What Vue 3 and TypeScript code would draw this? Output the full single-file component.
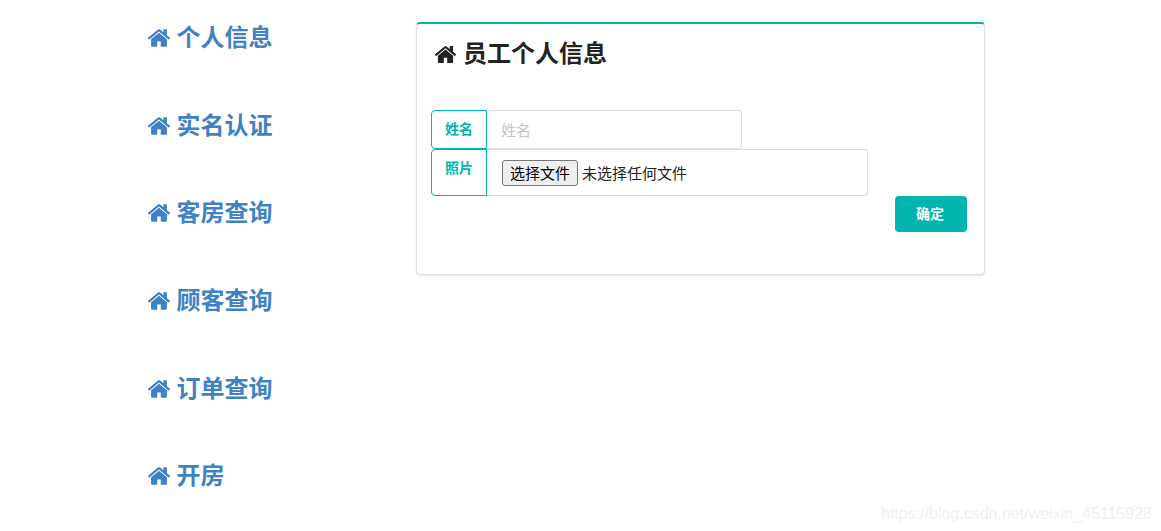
<script setup lang="ts">
const homePath =
  'M1472 992v480q0 26-19 45t-45 19h-384v-384h-256v384h-384q-26 0-45-19t-19-45v-480q0-1 .5-3t.5-3l575-474 575 474q1 2 1 6zm223-69l-62 74q-8 9-21 11h-3q-13 0-21-7l-692-577-692 577q-12 8-24 7-13-2-21-11l-62-74q-8-10-7-23.5t11-21.5l719-599q32-26 76-26t76 26l244 204v-195q0-14 9-23t23-9h192q14 0 23 9t9 23v408l219 182q10 8 11 21.5t-7 23.5z'

const navItems: string[] = ['个人信息', '实名认证', '客房查询', '顾客查询', '订单查询', '开房']
</script>

<template>
  <div class="page">
    <nav class="nav">
      <a v-for="item in navItems" :key="item" class="nav-item" href="#">
        <svg class="home" viewBox="97 97 1598 1598"><path :d="homePath" fill="currentColor" /></svg>
        <span>{{ item }}</span>
      </a>
    </nav>

    <section class="card">
      <h3 class="title">
        <svg class="home title-home" viewBox="97 97 1598 1598"><path :d="homePath" fill="currentColor" /></svg>
        <span>员工个人信息</span>
      </h3>

      <div class="group name-group">
        <label class="addon">姓名</label>
        <input class="field" type="text" placeholder="姓名" />
      </div>
      <div class="group file-group">
        <label class="addon addon-top">照片</label>
        <div class="field file-field">
          <button class="file-btn" type="button">选择文件</button>
          <span class="file-text">未选择任何文件</span>
        </div>
      </div>
      <div class="actions">
        <button class="submit" type="button">确定</button>
      </div>
    </section>

    <div class="watermark">https://blog.csdn.net/weixin_45115928</div>
  </div>
</template>

<style>
html,
body {
  background: #fff;
}
</style>

<style scoped>
.page {
  position: relative;
  display: flex;
  align-items: flex-start;
  width: 1161px;
  height: 531px;
  box-sizing: border-box;
  padding: 22px 0 0 148px;
  overflow: hidden;
  font-family: "Liberation Sans", "Noto Sans CJK SC", sans-serif;
  color: #222;
}

.nav {
  display: flex;
  flex-direction: column;
  gap: 53.7px;
  width: 268px;
  flex: none;
  margin-top: -1px;
}

.nav-item {
  display: flex;
  align-items: center;
  gap: 6.5px;
  height: 34px;
  font-size: 24px;
  font-weight: 700;
  line-height: 34px;
  color: #3f82c4;
  text-decoration: none;
}

.home {
  width: 22px;
  height: 22px;
  flex: none;
}

.card {
  width: 569px;
  height: 253px;
  flex: none;
  box-sizing: border-box;
  padding: 0 17px 0 14px;
  background: #fff;
  border: 1px solid #e0e0e0;
  border-top: 2px solid #00b5ad;
  border-radius: 4px;
  box-shadow: 0 1px 2px rgba(0, 0, 0, 0.1);
}

.title {
  display: flex;
  align-items: center;
  gap: 7px;
  height: 34px;
  margin: 13px 0 39px 4px;
  font-size: 24px;
  font-weight: 700;
  line-height: 34px;
  color: #222;
}

.title-home {
  width: 21px;
  height: 21px;
}

.group {
  display: flex;
}

.name-group {
  width: 311px;
  height: 39px;
}

.file-group {
  width: 437px;
  height: 47px;
}

.addon {
  width: 56px;
  flex: none;
  box-sizing: border-box;
  display: flex;
  align-items: center;
  justify-content: center;
  padding-bottom: 3px;
  font-size: 14px;
  font-weight: 700;
  color: #00b5ad;
  background: #fff;
  border: 1px solid #00b5ad;
  border-radius: 4px 0 0 4px;
}

.addon-top {
  align-items: flex-start;
  padding: 7px 0 0;
}

.field {
  flex: 1;
  min-width: 0;
  box-sizing: border-box;
  padding: 1px 14px 0;
  font-family: inherit;
  font-size: 15px;
  color: #222;
  background: #fff;
  border: 1px solid #ddd;
  border-left: none;
  border-radius: 0 4px 4px 0;
  outline: none;
}

.field::placeholder {
  color: #c4c4c4;
}

.file-field {
  display: flex;
  align-items: center;
  gap: 4px;
  padding: 0 15px;
}

.file-btn {
  width: 76px;
  height: 26px;
  padding: 2px 0 0;
  font-family: inherit;
  font-size: 15px;
  line-height: 22px;
  color: #000;
  background: #efefef;
  border: 1px solid #767676;
  border-radius: 3px;
}

.file-text {
  font-size: 15px;
  color: #222;
}

.actions {
  display: flex;
  justify-content: flex-end;
}

.submit {
  width: 72px;
  height: 36px;
  padding: 0 2px 2px 0;
  font-family: inherit;
  font-size: 14px;
  font-weight: 700;
  color: #fff;
  background: #00b5ad;
  border: none;
  border-radius: 4px;
}

.watermark {
  position: absolute;
  right: 9px;
  bottom: 8px;
  font-size: 16px;
  color: #f0f0f0;
  white-space: nowrap;
}
</style>
